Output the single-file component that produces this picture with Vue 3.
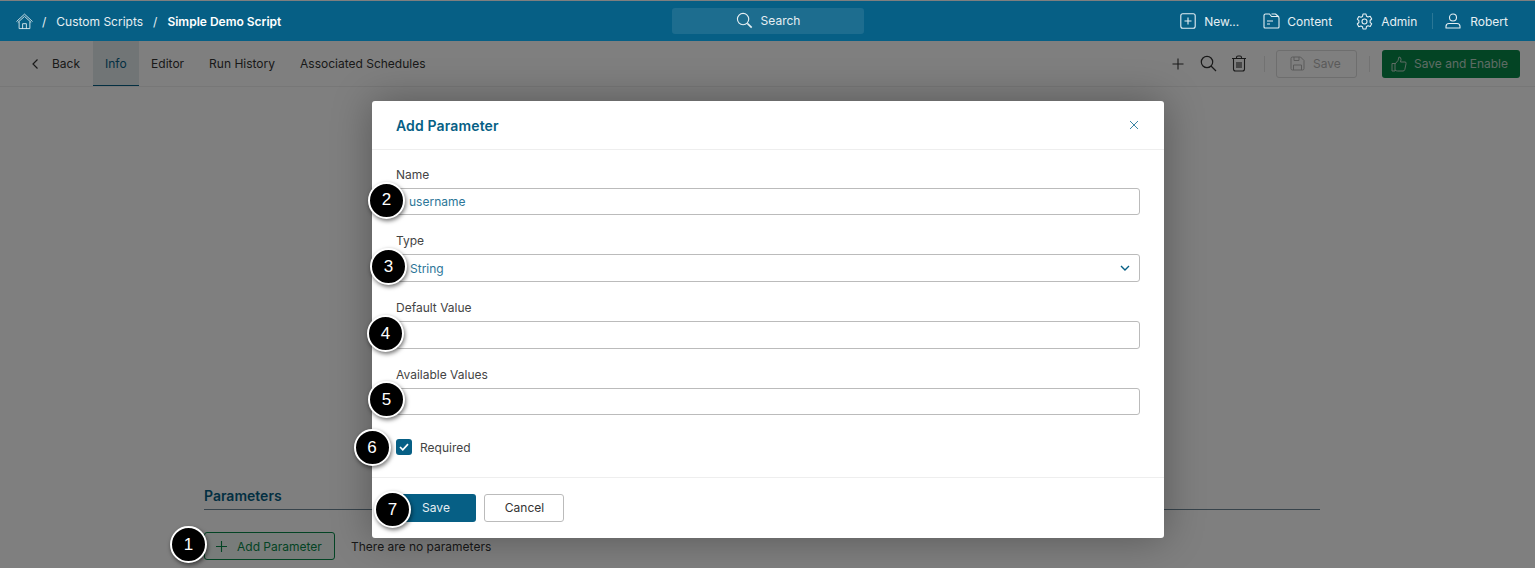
<script setup>
const tabs = ['Info', 'Editor', 'Run History', 'Associated Schedules']
const fields = [
  { label: 'Name', value: 'username', n: 2 },
  { label: 'Type', value: 'String', n: 3, select: true },
  { label: 'Default Value', value: '', n: 4 },
  { label: 'Available Values', value: '', n: 5 }
]
</script>

<template>
  <div class="page">
    <header class="top">
      <nav class="crumbs">
        <svg class="home" viewBox="0 0 18 18" width="17" height="17" fill="none" stroke="currentColor" stroke-width="1">
          <path d="M.8 8.800 9 1.200l8.200 7.600M2.200 9.800 9 3.600l6.800 6.200M3.300 9.500V16.500h11.400V9.500M7 16.500V11.300h4v5.200" stroke-linejoin="round" stroke-linecap="round" />
        </svg>
        <span class="sep">/</span>
        <span class="crumb">Custom Scripts</span>
        <span class="sep">/</span>
        <strong>Simple Demo Script</strong>
      </nav>
      <div class="search">
        <svg viewBox="0 0 18 18" width="17" height="17" fill="none" stroke="currentColor" stroke-width="1.2">
          <circle cx="7.500" cy="7.500" r="6" /><path d="m12 12 4.600 4.600" stroke-width="1.700" />
        </svg>
        <span>Search</span>
      </div>
      <div class="actions">
        <span class="act new">
          <svg viewBox="0 0 16 16" width="16" height="16" fill="none" stroke="currentColor" stroke-width="1.100">
            <rect x=".8" y=".8" width="14.400" height="14.400" rx="2" /><path d="M8 4.500v7M4.500 8h7" />
          </svg>New...
        </span>
        <span class="act content">
          <svg viewBox="0 0 17 16" width="17" height="16" fill="none" stroke="currentColor" stroke-width="1.100">
            <path d="M1 2.500Q1 1 2.500 1h4l2 2.500h6q1.500 0 1.500 1.500v9q0 1-1 1H2q-1 0-1-1zM8.500 1h4l3.500 3M4 8h6M4 11h3" stroke-linejoin="round" />
          </svg>Content
        </span>
        <span class="act admin">
          <svg viewBox="0 0 17 17" width="17" height="17" fill="none" stroke="currentColor" stroke-width="1.100">
            <path d="M7 1h3l.5 2.200 1.500.8 2.200-.7 1.500 2.700-1.600 1.500v1.800l1.600 1.500-1.500 2.700-2.200-.7-1.500.8L10 16H7l-.5-2.200-1.500-.8-2.200.7-1.500-2.700 1.600-1.500V7.700L1.300 6.200 2.800 3.500l2.200.7 1.500-.8z" stroke-linejoin="round" />
            <circle cx="8.500" cy="8.500" r="2.500" />
          </svg>Admin
        </span>
        <span class="vr"></span>
        <span class="act user">
          <svg viewBox="0 0 16 16" width="16" height="16" fill="none" stroke="currentColor" stroke-width="1.100">
            <circle cx="8" cy="4.500" r="3.500" /><path d="M1 15v-1.500Q1 10.500 4 10.500h8q3 0 3 3V15z" stroke-linejoin="round" />
          </svg>Robert
        </span>
      </div>
    </header>

    <div class="sub">
      <span class="back">
        <svg viewBox="0 0 8 12" width="8" height="12" fill="none" stroke="currentColor" stroke-width="1.200"><path d="M6.500 1.500 2 6l4.500 4.500" /></svg>
        Back
      </span>
      <span v-for="(t, i) in tabs" :key="t" class="tab" :class="{ on: i === 0 }">{{ t }}</span>
      <div class="tools">
        <svg class="ic plus" viewBox="0 0 14 14" width="14" height="14" fill="none" stroke="currentColor" stroke-width="1.100"><path d="M1.500 7h11M7 1.500v11" /></svg>
        <svg class="ic mag" viewBox="0 0 17 17" width="17" height="17" fill="none" stroke="currentColor" stroke-width="1.200"><circle cx="7" cy="7" r="5.700" /><path d="m11 11 5 5" /></svg>
        <svg class="ic bin" viewBox="0 0 16 17" width="16" height="17" fill="none" stroke="currentColor" stroke-width="1.100"><path d="M1 3.500h14M5.500 3.500v-1q0-1.500 1.500-1.500h2q1.500 0 1.500 1.500v1M2.500 3.500V14q0 2 2 2h7q2 0 2-2V3.500M6 7v6M8 7v6M10 7v6" /></svg>
        <span class="dv one"></span>
        <span class="btn-save">
          <svg viewBox="0 0 15 15" width="15" height="15" fill="none" stroke="currentColor" stroke-width="1"><path d="M1 2.500Q1 1 2.500 1h8L14 4.500v8q0 1.500-1.500 1.500h-10Q1 14 1 12.500zM4 1v3.500h5V1M3.500 14V9h8v5" /></svg>
          Save
        </span>
        <span class="dv two"></span>
        <span class="btn-enable">
          <svg viewBox="0 0 16 16" width="16" height="16" fill="none" stroke="currentColor" stroke-width="1"><path d="M1 7.500h3V15H1zM4 8l3-3.500L8 1q2 0 2 2.500L9.500 6H14q1.500 0 1 1.800l-1.200 5.700q-.3 1.500-1.800 1.500H6.500Q5 15 4 14" stroke-linejoin="round" /></svg>
          Save and Enable
        </span>
      </div>
    </div>

    <main class="body">
      <h2>Parameters</h2>
      <div class="row">
        <span class="add">
          <svg viewBox="0 0 13 13" width="13" height="13" fill="none" stroke="currentColor" stroke-width="1.100"><path d="M6.500 1v11M1 6.500h11" /></svg>
          Add Parameter
        </span>
        <span class="none">There are no parameters</span>
      </div>
    </main>

    <div class="scrim"></div>

    <section class="modal">
      <div class="m-head">
        <h3>Add Parameter</h3>
        <svg viewBox="0 0 10 10" width="10" height="10" fill="none" stroke="currentColor" stroke-width="1"><path d="m1 1 8 8M9 1 1 9" /></svg>
      </div>
      <div class="m-body">
        <div v-for="f in fields" :key="f.label" class="field">
          <label>{{ f.label }}</label>
          <div class="input" :class="{ sel: f.select }">
            <span class="val">{{ f.value }}</span>
            <svg v-if="f.select" viewBox="0 0 10 6" width="10" height="6" fill="none" stroke="currentColor" stroke-width="1.400"><path d="m1 1 4 4 4-4" /></svg>
          </div>
          <span class="badge" :class="'b' + f.n">{{ f.n }}</span>
        </div>
        <div class="check">
          <span class="box">
            <svg viewBox="0 0 10 8" width="10" height="8" fill="none" stroke="#fff" stroke-width="1.700"><path d="m1 4 2.800 2.800L9 1.200" /></svg>
          </span>
          Required
          <span class="badge b6">6</span>
        </div>
      </div>
      <div class="m-foot">
        <span class="primary">Save</span>
        <span class="cancel">Cancel</span>
        <span class="badge b7">7</span>
      </div>
    </section>

    <span class="badge b1">1</span>
  </div>
</template>

<style>
html, body { margin: 0; background: #fff; }
</style>

<style scoped>
.page {
  position: relative;
  width: 1535px;
  height: 568px;
  overflow: hidden;
  padding-top: 1px;
  box-sizing: border-box;
  font-family: Inter, "Liberation Sans", sans-serif;
  font-size: 12px;
  color: #333;
  background: #fff;
}
.top {
  position: relative;
  z-index: 3;
  height: 40px;
  background: #065f85;
  color: #e6eff3;
  display: flex;
  align-items: center;
  padding-left: 16px;
}
.crumbs { display: flex; align-items: center; width: 656px; white-space: nowrap; }
.crumbs .home { margin-right: 9px; color: #d5e4ea; }
.sep { margin-right: 10px; }
.crumb { margin-right: 10px; }
.crumbs strong { font-weight: 600; color: #fff; }
.search {
  width: 192px;
  height: 26px;
  box-sizing: border-box;
  padding-bottom: 2px;
  border-radius: 3px;
  background: #1d6d8f;
  display: flex;
  align-items: center;
  justify-content: center;
  gap: 8px;
}
.actions { display: flex; align-items: center; margin-left: auto; padding-right: 27px; }
.act { display: flex; align-items: center; white-space: nowrap; }
.new { gap: 8px; margin-right: 24px; }
.content { gap: 7px; margin-right: 24px; }
.admin { gap: 8px; margin-right: 15px; }
.user { gap: 9px; }
.vr { width: 1px; height: 16px; background: #2a7796; margin-right: 12px; }
.sub {
  height: 45px;
  box-sizing: content-box;
  border-bottom: 1px solid #eee;
  display: flex;
  align-items: stretch;
  padding-left: 31px;
  color: #333;
  background: #fff;
}
.back { display: flex; align-items: center; gap: 13px; width: 62px; }
.tab { display: flex; align-items: center; padding: 0 12.500px; }
.tab.on { padding: 0 12px; color: #065f85; background: #e3eaed; box-shadow: inset 0 -1px 0 #065f85; }
.tools { margin-left: auto; display: flex; align-items: center; padding-right: 15px; }
.ic { flex: none; color: #333; }
.plus { margin-right: 15px; }
.mag { margin-right: 14px; }
.bin { margin-right: 17px; }
.dv { width: 1px; height: 16px; background: #e4e4e4; }
.dv.one { margin-right: 11px; }
.dv.two { margin: 0 12px; }
.btn-save {
  width: 81px;
  height: 28px;
  box-sizing: border-box;
  padding-left: 13px;
  border: 1px solid #dcdcdc;
  border-radius: 3px;
  display: flex;
  align-items: center;
  gap: 8px;
  color: #b5b5b5;
}
.btn-enable {
  width: 138px;
  height: 28px;
  box-sizing: border-box;
  padding-left: 9px;
  background: #078849;
  color: #bdd8c9;
  border-radius: 3px;
  display: flex;
  align-items: center;
  gap: 7px;
}
.body { padding: 400px 215px 0 204px; }
h2 {
  margin: 0;
  font-size: 14px;
  font-weight: 600;
  color: #065f85;
  line-height: 17px;
  padding-bottom: 5px;
  border-bottom: 1px solid #6f8796;
}
.row { display: flex; align-items: center; gap: 16px; margin-top: 22px; }
.add {
  width: 119px;
  height: 26px;
  padding-left: 10px;
  box-sizing: content-box;
  border: 1px solid #078849;
  border-radius: 3px;
  background: #f0f8f4;
  color: #078849;
  display: flex;
  align-items: center;
  gap: 9px;
}
.none { color: #333; }
.scrim { position: absolute; inset: 0; z-index: 1; background: rgba(0, 0, 0, .5); }
.modal {
  position: absolute;
  z-index: 2;
  left: 372px;
  top: 101px;
  width: 792px;
  height: 437px;
  background: #fff;
  border-radius: 3px;
  box-shadow: 0 0 40px rgba(0, 0, 0, .32);
  display: flex;
  flex-direction: column;
}
.m-head {
  height: 49px;
  flex: none;
  box-sizing: border-box;
  border-bottom: 1px solid #eee;
  display: flex;
  align-items: center;
  justify-content: space-between;
  padding: 0 25px 0 24px;
  color: #3c86a5;
}
h3 { margin: 0; font-size: 14px; font-weight: 600; color: #065f85; letter-spacing: .01em; }
.m-body { flex: 1; padding: 17.800px 24px 0; position: relative; }
.field { position: relative; height: 66.670px; }
label { display: block; line-height: 14px; margin-bottom: 6px; color: #444; }
.input {
  height: 27.400px;
  box-sizing: border-box;
  border: 1px solid #bbb;
  border-radius: 3px;
  padding: 0 12px;
  display: flex;
  align-items: center;
  justify-content: space-between;
  color: #2c7698;
}
.sel { padding: 0 9px 0 13px; }
.sel svg { color: #065f85; }
.check {
  position: relative;
  display: flex;
  align-items: center;
  gap: 8px;
  margin-top: 5px;
  height: 16px;
  color: #444;
}
.box {
  width: 16px;
  height: 16px;
  border-radius: 3px;
  background: #065f85;
  display: flex;
  align-items: center;
  justify-content: center;
}
.m-foot {
  position: relative;
  flex: none;
  height: 61px;
  box-sizing: border-box;
  border-top: 1px solid #eee;
  padding: 16px 0 0 20px;
  display: flex;
  gap: 8px;
}
.primary, .cancel {
  height: 28px;
  box-sizing: border-box;
  padding-bottom: 1px;
  border-radius: 3px;
  display: flex;
  align-items: center;
  justify-content: center;
}
.primary { width: 84px; padding-left: 4px; background: #065f85; color: #e6eff3; }
.cancel { width: 80px; padding-left: 1px; border: 1px solid #bbb; color: #333; }
.badge {
  position: absolute;
  z-index: 4;
  width: 33px;
  height: 33px;
  border-radius: 50%;
  background: #000;
  color: #fff;
  border: 2px solid #fff;
  box-shadow: 1px 2px 4px rgba(0, 0, 0, .55);
  display: flex;
  align-items: center;
  justify-content: center;
  font-family: "Liberation Sans", Arial, sans-serif;
  font-size: 17px;
}
.b1 { left: 170px; top: 526px; }
.b2 { left: -28px; top: 14px; }
.b3 { left: -26px; top: 14px; }
.b4 { left: -29px; top: 14px; }
.b5 { left: -28px; top: 13.500px; }
.b6 { left: -42.500px; top: -10px; }
.b7 { left: 2px; top: 13px; }
</style>
